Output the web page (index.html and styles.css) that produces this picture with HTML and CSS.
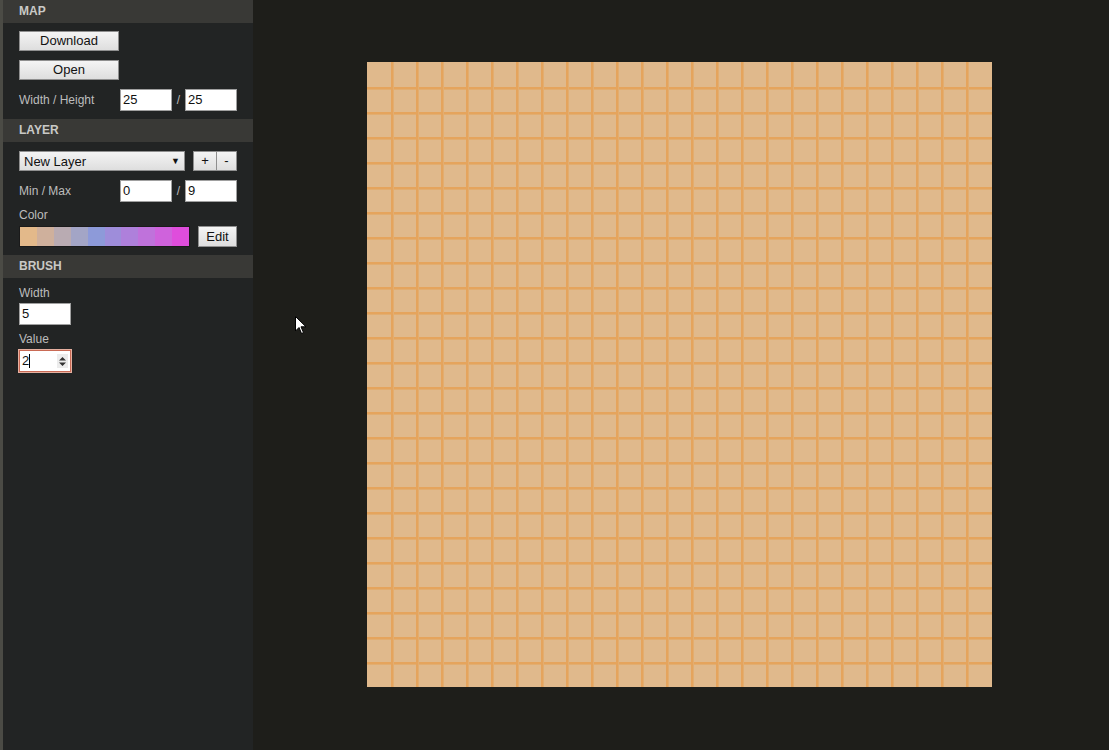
FILE: index.html
```html
<!DOCTYPE html>
<html>
<head>
<meta charset="utf-8">
<link rel="stylesheet" href="styles.css">
</head>
<body>
<div class="app">
  <aside class="sidebar">
    <div class="head">MAP</div>
    <div class="section first">
      <div class="btn wide">Download</div>
      <div class="btn wide">Open</div>
      <div class="row">
        <span class="label lw">Width / Height</span>
        <span class="input sm">25</span>
        <span class="slash">/</span>
        <span class="input sm">25</span>
      </div>
    </div>
    <div class="head">LAYER</div>
    <div class="section">
      <div class="row">
        <div class="select"><span>New Layer</span><span class="arrow">▼</span></div>
        <div class="pm">
          <span class="btn pmb">+</span><span class="btn pmb">-</span>
        </div>
      </div>
      <div class="row">
        <span class="label lw">Min / Max</span>
        <span class="input sm">0</span>
        <span class="slash">/</span>
        <span class="input sm">9</span>
      </div>
      <div class="label">Color</div>
      <div class="row colorrow">
        <div class="swatches">
          <span style="background:#e3b98a"></span>
          <span style="background:#cfb09c"></span>
          <span style="background:#b9abb2"></span>
          <span style="background:#a3a5c6"></span>
          <span style="background:#8d9ad9"></span>
          <span style="background:#9e8dda"></span>
          <span style="background:#ae80db"></span>
          <span style="background:#bf72db"></span>
          <span style="background:#cf62dc"></span>
          <span style="background:#df4ddc"></span>
        </div>
        <span class="btn edit">Edit</span>
      </div>
    </div>
    <div class="head">BRUSH</div>
    <div class="section brush">
      <div class="label">Width</div>
      <span class="input bw">5</span>
      <div class="label">Value</div>
      <span class="input bw focus"><span class="val">2</span><span class="caret"></span><span class="spin"><svg width="9" height="11" viewBox="0 0 9 11"><path d="M4.5 1 L8 4.5 L1 4.5 Z M1 6.5 L8 6.5 L4.5 10 Z" fill="#333"/></svg></span></span>
    </div>
  </aside>
  <main class="main">
    <div class="grid"></div>
  </main>
</div>
<svg class="cursor" width="12" height="19" viewBox="0 0 12 19"><path d="M0.5 0.5 L0.5 15 L4 11.5 L6.5 17.5 L8.5 16.6 L6 10.8 L11 10.8 Z" fill="#fff" stroke="#000" stroke-width="1"/></svg>
</body>
</html>
```
FILE: styles.css
```css
html, body {
  margin: 0;
  padding: 0;
  width: 1109px;
  height: 750px;
  overflow: hidden;
  background: #1e1e1a;
  font-family: "Liberation Sans", Arial, sans-serif;
}
.app {
  display: flex;
  height: 750px;
}
.sidebar {
  width: 250px;
  border-left: 3px solid #4b4b45;
  background: #222424;
  flex: none;
}
.head {
  height: 23px;
  line-height: 22px;
  background: #393936;
  color: #c9c9c6;
  font-size: 12px;
  font-weight: bold;
  padding-left: 16px;
}
.section {
  padding: 8px 16px 8px 16px;
  display: flex;
  flex-direction: column;
  align-items: flex-start;
}
.section.brush {
  padding-top: 8px;
}
.btn {
  box-sizing: border-box;
  background: linear-gradient(#f4f4f4, #dedede);
  border: 1px solid #8f8f8f;
  color: #111;
  font-size: 13px;
  text-align: center;
  height: 20px;
  line-height: 18px;
}
.wide {
  width: 100px;
  margin-bottom: 9px;
}
.row {
  display: flex;
  align-items: center;
  width: 218px;
  height: 22px;
}
.label {
  color: #bdbdbd;
  font-size: 12px;
  line-height: 14px;
}
.lw {
  width: 101px;
}
.input {
  box-sizing: border-box;
  display: inline-block;
  background: #fff;
  border: 1px solid #a0a0a0;
  height: 22px;
  line-height: 20px;
  font-size: 13px;
  color: #111;
  padding-left: 2px;
}
.sm {
  width: 52px;
}
.slash {
  color: #bdbdbd;
  font-size: 12px;
  width: 13px;
  text-align: center;
}
.section .row + .row {
  margin-top: 8px;
}
.select {
  box-sizing: border-box;
  width: 166px;
  height: 20px;
  background: linear-gradient(#f4f4f4, #dedede);
  border: 1px solid #8f8f8f;
  font-size: 13px;
  color: #111;
  display: flex;
  justify-content: space-between;
  align-items: center;
  padding: 0 4px 0 4px;
}
.arrow {
  font-size: 9px;
}
.pm {
  margin-left: 8px;
  display: flex;
}
.pmb {
  width: 24px;
  display: inline-block;
}
.pmb + .pmb {
  width: 20px;
  border-left: none;
}
.section > .row + .label {
  margin-top: 6px;
}
.section .label + .colorrow {
  margin-top: 4px;
}
.colorrow {
  justify-content: space-between;
  height: 21px;
}
.swatches {
  display: flex;
  width: 171px;
  height: 21px;
  border: 1px solid #1a1a1a;
  box-sizing: border-box;
}
.swatches span {
  flex: 1;
}
.edit {
  width: 39px;
  height: 21px;
  line-height: 19px;
}
.bw {
  width: 52px;
  margin-top: 3px;
  margin-bottom: 7px;
}
.focus {
  border: 1px solid #c96a55;
  box-shadow: 0 0 0 1px #e6b0a0;
  height: 22px;
  display: flex;
  align-items: center;
  position: relative;
  margin-top: 4px;
  margin-bottom: 0;
}
.val {
  line-height: 18px;
}
.caret {
  width: 1px;
  height: 14px;
  background: #000;
}
.spin {
  position: absolute;
  right: 2px;
  top: 3px;
  width: 11px;
  height: 14px;
  background: #ececec;
  display: flex;
  align-items: center;
  justify-content: center;
}
.main {
  flex: 1;
  padding: 62px 0 0 114px;
}
.grid {
  width: 625px;
  height: 625px;
  background-color: #e0b98c;
  background-image:
    repeating-linear-gradient(to right, #e5a45d 0 2px, #e2ad70 2px 3px, transparent 3px 25px),
    repeating-linear-gradient(to bottom, #e5a45d 0 2px, #e2ad70 2px 3px, transparent 3px 25px);
  background-size: 578px 625px, 625px 578px;
  background-position: 24px 0, 0 25px;
  background-repeat: no-repeat;
}
.cursor {
  position: absolute;
  left: 295px;
  top: 316px;
}
```
